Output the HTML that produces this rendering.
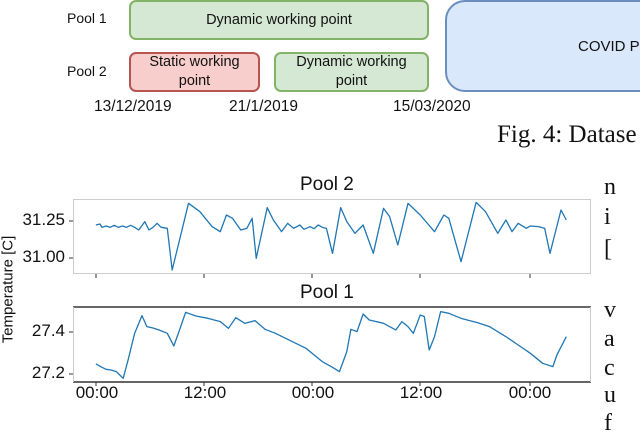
<!DOCTYPE html>
<html><head><meta charset="utf-8"><style>
body{margin:0;width:640px;height:431px;overflow:hidden;background:#fff;position:relative;font-family:"Liberation Sans",sans-serif;color:#111}
.a{position:absolute;white-space:nowrap}
.box{position:absolute;box-sizing:border-box;border-radius:7px;border:2px solid;display:flex;align-items:center;justify-content:center;text-align:center;font-size:14.5px;line-height:19px}
.g{background:#d5e8d4;border-color:#82b366}
.r{background:#f8cecc;border-color:#b85450}
.s{font-family:"Liberation Serif",serif;font-size:25px;color:#111}
.t{font-size:17px}
.yl{position:absolute;right:575px;font-size:17px;white-space:nowrap}
.xl{position:absolute;width:60px;margin-left:-30px;text-align:center;font-size:17px;top:383px}
</style></head><body>
<div class="a" style="left:67px;top:10px;font-size:14px">Pool 1</div>
<div class="a" style="left:67px;top:63px;font-size:14px">Pool 2</div>
<div class="box g" style="left:129px;top:0px;width:300px;height:40px">Dynamic working point</div>
<div class="box r" style="left:129px;top:52px;width:131px;height:40px">Static working<br>point</div>
<div class="box g" style="left:274px;top:52px;width:155px;height:40px">Dynamic working<br>point</div>
<div class="box" style="left:445px;top:0px;width:230px;height:92px;border-color:#6c8ebf;background:#dae8fc;border-radius:20px;justify-content:flex-start;padding-left:131px;font-size:15px">COVID P</div>
<div class="a" style="left:94px;top:98px;font-size:15.5px">13/12/2019</div>
<div class="a" style="left:229px;top:98px;font-size:15.5px">21/1/2019</div>
<div class="a" style="left:393px;top:98px;font-size:15.5px">15/03/2020</div>
<div class="a s" style="left:497px;top:121px">Fig. 4: Datase</div>

<div class="a" style="left:300px;top:174px;font-size:19px">Pool 2</div>
<div class="a" style="left:300px;top:282px;font-size:19px">Pool 1</div>
<div class="a" style="left:-55px;top:281px;transform:rotate(-90deg);font-size:15px;width:126px;text-align:center">Temperature [C]</div>
<div class="yl" style="top:210px">31.25</div>
<div class="yl" style="top:247px">31.00</div>
<div class="yl" style="top:321px">27.4</div>
<div class="yl" style="top:363px">27.2</div>
<div class="xl" style="left:97px">00:00</div>
<div class="xl" style="left:205px">12:00</div>
<div class="xl" style="left:313px">00:00</div>
<div class="xl" style="left:421px">12:00</div>
<div class="xl" style="left:530px">00:00</div>

<svg class="a" style="left:0;top:0" width="640" height="431">
<rect x="73.5" y="199.5" width="517" height="74" fill="none" stroke="#ccc"/>
<line x1="73" y1="307" x2="591" y2="307" stroke="#333" stroke-width="1.5"/>
<line x1="73" y1="382" x2="591" y2="382" stroke="#333" stroke-width="1.5"/>
<line x1="73.5" y1="307" x2="73.5" y2="382" stroke="#ccc"/>
<line x1="590.5" y1="307" x2="590.5" y2="382" stroke="#ccc"/>
<g stroke="#333"><line x1="69" y1="221" x2="73" y2="221"/><line x1="69" y1="258" x2="73" y2="258"/><line x1="69" y1="332" x2="73" y2="332"/><line x1="69" y1="374" x2="73" y2="374"/>
<line x1="96" y1="274" x2="96" y2="278"/><line x1="204" y1="274" x2="204" y2="278"/><line x1="312" y1="274" x2="312" y2="278"/><line x1="420" y1="274" x2="420" y2="278"/><line x1="530" y1="274" x2="530" y2="278"/>
<line x1="96" y1="382" x2="96" y2="386"/><line x1="204" y1="382" x2="204" y2="386"/><line x1="312" y1="382" x2="312" y2="386"/><line x1="420" y1="382" x2="420" y2="386"/><line x1="530" y1="382" x2="530" y2="386"/></g>
<g transform="translate(0,170) scale(0.408,0.3333)" fill="none" stroke="#1f77b4" stroke-width="1.3" stroke-linejoin="round">
<polyline vector-effect="non-scaling-stroke" points="235,165 245,162 250,172 260,168 270,172 280,166 290,172 300,168 310,172 320,166 330,172 340,180 355,155 365,180 375,172 385,160 395,172 410,175 422,300 440,210 462,100 490,125 520,170 540,185 555,135 570,145 590,180 605,175 618,145 628,265 655,113 670,150 690,185 705,160 720,175 735,165 745,178 760,170 770,176 780,165 790,172 800,175 815,250 835,113 850,155 870,190 890,165 915,250 940,115 955,140 975,225 1000,100 1030,135 1065,185 1088,135 1100,145 1130,275 1167,97 1190,125 1220,190 1240,150 1255,185 1270,160 1290,175 1300,168 1320,170 1335,175 1348,250 1375,120 1388,150"/>
<polyline vector-effect="non-scaling-stroke" points="235,582 250,592 260,598 272,600 285,605 302,625 315,565 330,490 348,437 360,470 375,474 390,480 410,490 426,528 440,480 455,427 480,438 510,445 540,455 560,475 578,443 600,460 625,452 650,478 675,490 700,505 725,520 750,535 770,555 790,575 815,592 832,605 850,545 860,478 875,485 890,432 905,450 940,460 970,480 985,455 1000,470 1013,490 1030,435 1040,440 1052,540 1065,500 1080,425 1100,430 1130,445 1170,458 1200,470 1220,485 1240,500 1270,525 1300,550 1330,580 1355,590 1365,555 1388,500"/>
</g>
</svg>

<div class="a s" style="left:604px;top:174px;font-size:24px">n</div>
<div class="a s" style="left:604px;top:204px;font-size:24px">i</div>
<div class="a s" style="left:604px;top:236px;font-size:24px">[</div>
<div class="a s" style="left:604px;top:297px;font-size:24px">v</div>
<div class="a s" style="left:604px;top:326px;font-size:24px">a</div>
<div class="a s" style="left:604px;top:355px;font-size:24px">c</div>
<div class="a s" style="left:604px;top:382px;font-size:24px">u</div>
<div class="a s" style="left:604px;top:410px;font-size:24px">f</div>
</body></html>
